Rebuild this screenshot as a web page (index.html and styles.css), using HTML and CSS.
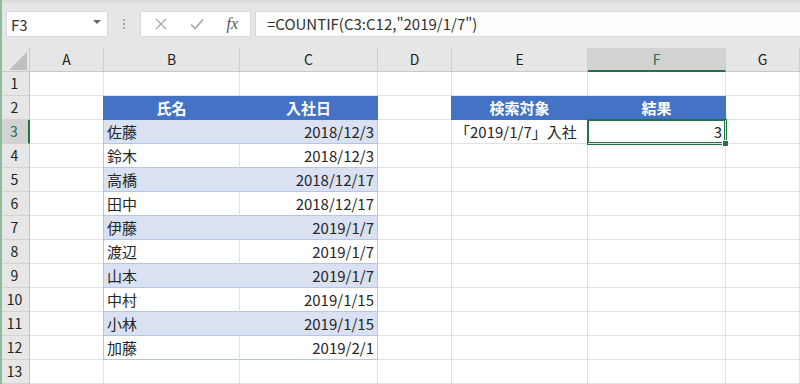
FILE: index.html
```html
<!DOCTYPE html>
<html lang="ja">
<head>
    <meta charset="UTF-8">
    <title>COUNTIF</title>
    <link rel="stylesheet" href="styles.css">
</head>
<body>
<div class="window">

    <!-- Formula bar -->
    <div class="toolbar">
        <div class="name-box">
            <span>F3</span>
            <span class="drop"></span>
        </div>
        <div class="grip">
            <svg width="4" height="12" viewBox="0 0 4 12"><circle cx="2" cy="2" r="1.1" fill="#9a9a9a"/><circle cx="2" cy="6" r="1.1" fill="#9a9a9a"/><circle cx="2" cy="10" r="1.1" fill="#9a9a9a"/></svg>
        </div>
        <div class="fx-buttons">
            <svg width="12" height="12" viewBox="0 0 12 12"><path d="M1 1 L11 11 M11 1 L1 11" stroke="#a6a6a6" stroke-width="1.2" fill="none"/></svg>
            <svg width="14" height="12" viewBox="0 0 14 12"><path d="M1 6.5 L5 10.5 L13 1.5" stroke="#a6a6a6" stroke-width="1.6" fill="none"/></svg>
            <span class="fx">fx</span>
        </div>
        <div class="formula">=COUNTIF(C3:C12,"2019/1/7")</div>
    </div>

    <!-- Sheet -->
    <div class="sheet">
        <div class="corner"><svg width="20" height="19" viewBox="0 0 20 19"><path d="M19 0 L19 18 L1 18 Z" fill="#bfbfbf"/></svg></div>
        <div class="ch">A</div><div class="ch">B</div><div class="ch">C</div><div class="ch">D</div>
        <div class="ch">E</div><div class="ch active-col">F</div><div class="ch">G</div>

        <div class="rh">1</div>
        <div class="c"></div><div class="c"></div><div class="c"></div><div class="c"></div><div class="c"></div><div class="c"></div><div class="c"></div>

        <div class="rh">2</div>
        <div class="c"></div><div class="c th tl">氏名</div><div class="c th tr">入社日</div><div class="c"></div>
        <div class="c th tl">検索対象</div><div class="c th tr">結果</div><div class="c"></div>

        <div class="rh active-row">3</div>
        <div class="c"></div><div class="c td band tl">佐藤</div><div class="c td band tr num">2018/12/3</div><div class="c"></div>
        <div class="c">「2019/1/7」入社</div><div class="c num selected">3<span class="handle"></span></div><div class="c"></div>

        <div class="rh">4</div>
        <div class="c"></div><div class="c td tl">鈴木</div><div class="c td tr num">2018/12/3</div><div class="c"></div><div class="c"></div><div class="c"></div><div class="c"></div>

        <div class="rh">5</div>
        <div class="c"></div><div class="c td band tl">高橋</div><div class="c td band tr num">2018/12/17</div><div class="c"></div><div class="c"></div><div class="c"></div><div class="c"></div>

        <div class="rh">6</div>
        <div class="c"></div><div class="c td tl">田中</div><div class="c td tr num">2018/12/17</div><div class="c"></div><div class="c"></div><div class="c"></div><div class="c"></div>

        <div class="rh">7</div>
        <div class="c"></div><div class="c td band tl">伊藤</div><div class="c td band tr num">2019/1/7</div><div class="c"></div><div class="c"></div><div class="c"></div><div class="c"></div>

        <div class="rh">8</div>
        <div class="c"></div><div class="c td tl">渡辺</div><div class="c td tr num">2019/1/7</div><div class="c"></div><div class="c"></div><div class="c"></div><div class="c"></div>

        <div class="rh">9</div>
        <div class="c"></div><div class="c td band tl">山本</div><div class="c td band tr num">2019/1/7</div><div class="c"></div><div class="c"></div><div class="c"></div><div class="c"></div>

        <div class="rh">10</div>
        <div class="c"></div><div class="c td tl">中村</div><div class="c td tr num">2019/1/15</div><div class="c"></div><div class="c"></div><div class="c"></div><div class="c"></div>

        <div class="rh">11</div>
        <div class="c"></div><div class="c td band tl">小林</div><div class="c td band tr num">2019/1/15</div><div class="c"></div><div class="c"></div><div class="c"></div><div class="c"></div>

        <div class="rh">12</div>
        <div class="c"></div><div class="c td tl">加藤</div><div class="c td tr num">2019/2/1</div><div class="c"></div><div class="c"></div><div class="c"></div><div class="c"></div>

        <div class="rh">13</div>
        <div class="c"></div><div class="c"></div><div class="c"></div><div class="c"></div><div class="c"></div><div class="c"></div><div class="c"></div>
    </div>

</div>
</body>
</html>
```

FILE: styles.css
```css
body {
    margin: 0;
    font-family: "Noto Sans CJK JP", "Noto Sans", sans-serif;
    color: #262626;
    background-color: #ffffff;
}
.window {
    position: relative;
    width: 800px;
    height: 384px;
    overflow: hidden;
}
.window::before {
    content: "";
    position: absolute;
    left: 0;
    top: 0;
    bottom: 0;
    width: 2px;
    background-color: #8cbc9c;
    z-index: 5;
}

/* Formula bar */
.toolbar {
    height: 48px;
    box-sizing: border-box;
    background-color: #e6e6e6;
    border-top: 3px solid #dcdcdc;
    padding: 8px 0 0 6px;
    display: flex;
    align-items: flex-start;
}
.name-box {
    width: 102px;
    height: 26px;
    box-sizing: border-box;
    background-color: #ffffff;
    border: 1px solid #dadada;
    display: flex;
    align-items: center;
    justify-content: space-between;
    padding: 0 6px 0 4px;
    font-size: 15px;
    color: #333;
}
.drop {
    width: 0;
    height: 0;
    border-left: 4px solid transparent;
    border-right: 4px solid transparent;
    border-top: 4px solid #666;
    margin-top: -4px;
}
.grip {
    width: 32px;
    height: 26px;
    display: flex;
    align-items: center;
    justify-content: center;
}
.fx-buttons {
    width: 111px;
    height: 26px;
    box-sizing: border-box;
    background-color: #ffffff;
    border: 1px solid #dadada;
    display: flex;
    align-items: center;
    justify-content: space-between;
    padding: 0 12px 0 14px;
}
.fx {
    font-family: "Liberation Serif", serif;
    font-style: italic;
    font-size: 16px;
    color: #555;
}
.formula {
    flex: 1;
    height: 26px;
    box-sizing: border-box;
    margin-left: 4px;
    background-color: #fdfdfc;
    border: 1px solid #dadada;
    border-right: none;
    padding-left: 11px;
    font-size: 15px;
    line-height: 24px;
    color: #333;
}

/* Sheet grid */
.sheet {
    display: grid;
    grid-template-columns: 30px 74px 136px 138px 74px 136px 138px 74px;
    grid-auto-rows: 24px;
}
.sheet > div {
    box-sizing: border-box;
    position: relative;
}
.corner {
    background-color: #e6e6e6;
    border-right: 1px solid #c8c8c8;
    border-bottom: 1px solid #c8c8c8;
    padding: 4px 0 0 8px;
}
.corner svg {
    display: block;
}
.ch {
    background-color: #e6e6e6;
    border-right: 1px solid #cdcdcd;
    border-bottom: 1px solid #c8c8c8;
    text-align: center;
    font-size: 14px;
    line-height: 23px;
    color: #222;
}
.ch.active-col {
    background-color: #d2d2d2;
    color: #217346;
    border-bottom: 2px solid #217346;
}
.rh {
    background-color: #e6e6e6;
    border-right: 1px solid #c0c0c0;
    border-bottom: 1px solid #d2d2d2;
    text-align: center;
    font-size: 14px;
    line-height: 23px;
    color: #222;
}
.rh.active-row {
    background-color: #d2d2d2;
    color: #217346;
    border-right: 2px solid #217346;
}
.c {
    border-right: 1px solid #e1e1e1;
    border-bottom: 1px solid #e1e1e1;
    padding: 0 3px;
    font-size: 15px;
    line-height: 23px;
    white-space: nowrap;
    color: #262626;
}
.num {
    text-align: right;
}

/* Table style */
.th {
    background-color: #4472c4;
    border-color: #4472c4;
    color: #ffffff;
    font-weight: bold;
    text-align: center;
}
.td {
    border-bottom-color: #b4c6e7;
}
.td.band {
    background-color: #d9e1f2;
}
.td.band.tl {
    border-right-color: #d9e1f2;
}
.tl {
    box-shadow: -1px 0 0 #b4c6e7;
}
.th.tl {
    box-shadow: -1px 0 0 #4472c4;
}
.td.tr {
    border-right-color: #b4c6e7;
}

/* Active cell */
.selected {
    box-shadow: 0 0 0 1px #217346, inset 0 0 0 1px #217346;
    z-index: 2;
}
.handle {
    position: absolute;
    right: -4px;
    bottom: -4px;
    width: 5px;
    height: 5px;
    background-color: #217346;
    border: 1px solid #ffffff;
}
```
